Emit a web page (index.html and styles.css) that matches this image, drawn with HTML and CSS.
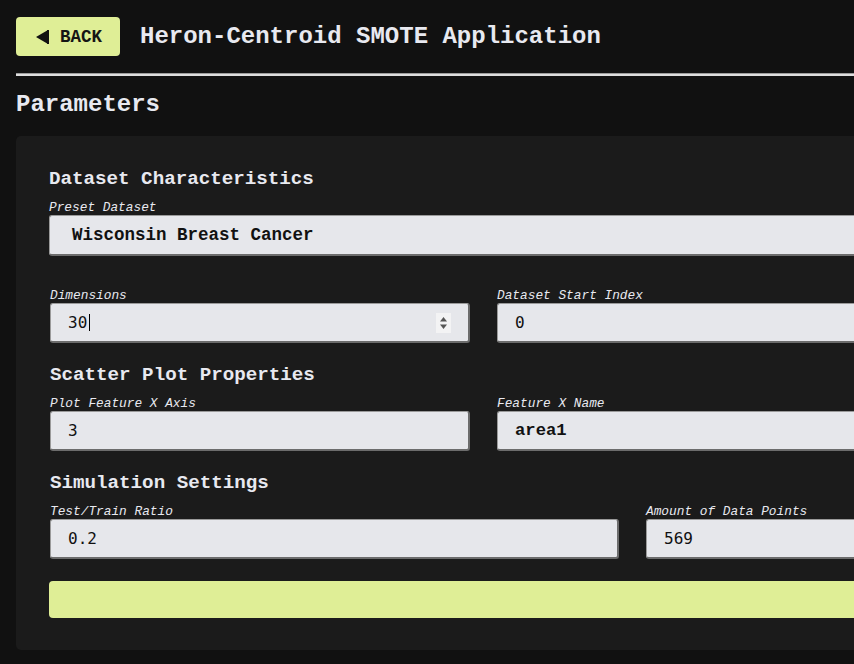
FILE: index.html
```html
<!DOCTYPE html>
<html lang="en">
<head>
<meta charset="utf-8">
<title>Heron-Centroid SMOTE Application</title>
<link rel="stylesheet" href="styles.css">
</head>
<body>
<div class="page">
  <header class="topbar">
    <button class="back-btn" type="button">
      <svg class="back-icon" width="13" height="14" viewBox="0 0 13 14"><polygon points="12,0 12,14 0,7" fill="#111"/><rect x="11" y="0" width="2" height="14" fill="#111"/></svg>
      <span>BACK</span>
    </button>
    <h1 class="title">Heron-Centroid SMOTE Application</h1>
  </header>
  <div class="divider"></div>
  <h2 class="section-title">Parameters</h2>

  <section class="panel">
    <h3 class="group-title">Dataset Characteristics</h3>
    <label class="lbl">Preset Dataset</label>
    <div class="field select">Wisconsin Breast Cancer</div>

    <div class="row row-half">
      <div class="col">
        <label class="lbl">Dimensions</label>
        <div class="field num">30<span class="caret"></span>
          <span class="spin">
            <svg width="15" height="20" viewBox="0 0 15 20"><polygon points="7.5,4 11,8.5 4,8.5" fill="#555"/><polygon points="7.5,16 11,11.5 4,11.5" fill="#555"/></svg>
          </span>
        </div>
      </div>
      <div class="col">
        <label class="lbl">Dataset Start Index</label>
        <div class="field num">0</div>
      </div>
    </div>

    <h3 class="group-title spaced">Scatter Plot Properties</h3>
    <div class="row row-half">
      <div class="col">
        <label class="lbl">Plot Feature X Axis</label>
        <div class="field num">3</div>
      </div>
      <div class="col">
        <label class="lbl">Feature X Name</label>
        <div class="field txt">area1</div>
      </div>
    </div>

    <h3 class="group-title spaced">Simulation Settings</h3>
    <div class="row row-wide">
      <div class="col">
        <label class="lbl">Test/Train Ratio</label>
        <div class="field num">0.2</div>
      </div>
      <div class="col">
        <label class="lbl">Amount of Data Points</label>
        <div class="field num">569</div>
      </div>
    </div>

    <button class="run-btn" type="button"></button>
  </section>
</div>
</body>
</html>
```

FILE: styles.css
```css
html, body {
  margin: 0;
  padding: 0;
  background: #111111;
  overflow: hidden;
  height: 100%;
}

body {
  font-family: "Courier New", "Nimbus Mono PS", "Nimbus Mono L", "FreeMono", "Liberation Mono", monospace;
  color: #e8e9f0;
}

.page {
  width: 1200px;
  padding: 17px 16px 0 16px;
}

.topbar {
  display: flex;
  align-items: center;
  gap: 20px;
  margin-bottom: 17px;
}

.back-btn {
  display: flex;
  align-items: center;
  gap: 11px;
  height: 39px;
  width: 104px;
  padding: 0 0 0 20px;
  border: none;
  border-radius: 4px;
  background: #dfee96;
  color: #151515;
  font-family: "Courier New", "Nimbus Mono PS", "Nimbus Mono L", "FreeMono", "Liberation Mono", monospace;
  font-weight: bold;
  font-size: 17.5px;
  cursor: pointer;
}

.back-icon {
  display: block;
  flex: none;
}

.title {
  margin: 0;
  font-size: 24px;
  font-weight: bold;
  color: #e8e9f0;
  line-height: 28px;
}

.divider {
  height: 0;
  border-top: 1px solid #9c9c9c;
  border-bottom: 2px solid #dedede;
}

.section-title {
  margin: 15px 0 17px 0;
  font-size: 24px;
  line-height: 28px;
  font-weight: bold;
  color: #e8e9f0;
}

.panel {
  width: 936px;
  box-sizing: border-box;
  background: #1b1b1b;
  border-radius: 5px;
  padding: 32px 34px 32px 33px;
}

.group-title {
  margin: 0 0 10px 0;
  font-size: 19.2px;
  line-height: 22px;
  font-weight: bold;
  color: #e8e9f0;
}

.group-title.spaced {
  margin-top: 21px;
  padding-left: 1px;
}

.lbl {
  display: block;
  font-size: 12.8px;
  line-height: 15px;
  font-style: italic;
  color: #e8e9f0;
}

.field {
  position: relative;
  box-sizing: border-box;
  height: 40px;
  display: flex;
  align-items: center;
  background: #e6e7eb;
  color: #111;
  border-top: 1px solid #9a9a9a;
  border-left: 1px solid #9a9a9a;
  border-right: 2px solid #6c6c6c;
  border-bottom: 2px solid #6c6c6c;
  border-radius: 3px;
  padding-left: 17px;
}

.field.select {
  height: 41px;
  padding-left: 22px;
  font-weight: bold;
  font-size: 17.5px;
  margin-bottom: 32px;
  border-right: none;
  border-top-right-radius: 0;
  border-bottom-right-radius: 0;
}

.field.num {
  font-family: "DejaVu Sans Mono", monospace;
  font-size: 16px;
}

.field.txt {
  font-weight: bold;
  font-size: 17.2px;
}

.caret {
  display: inline-block;
  width: 1px;
  height: 17px;
  margin-left: 2px;
  background: #000;
}

.spin {
  position: absolute;
  right: 17px;
  top: 9px;
  width: 15px;
  height: 20px;
  background: #f3f3f4;
  display: block;
}

.spin svg {
  display: block;
}

.row {
  display: grid;
  column-gap: 27px;
  padding-left: 1px;
}

.row-half {
  grid-template-columns: 420px 1fr;
}

.row-wide {
  grid-template-columns: 569px 1fr;
}

.run-btn {
  display: block;
  width: 100%;
  height: 37px;
  margin-top: 22px;
  border: none;
  border-radius: 4px;
  background: #dfee96;
}
```
